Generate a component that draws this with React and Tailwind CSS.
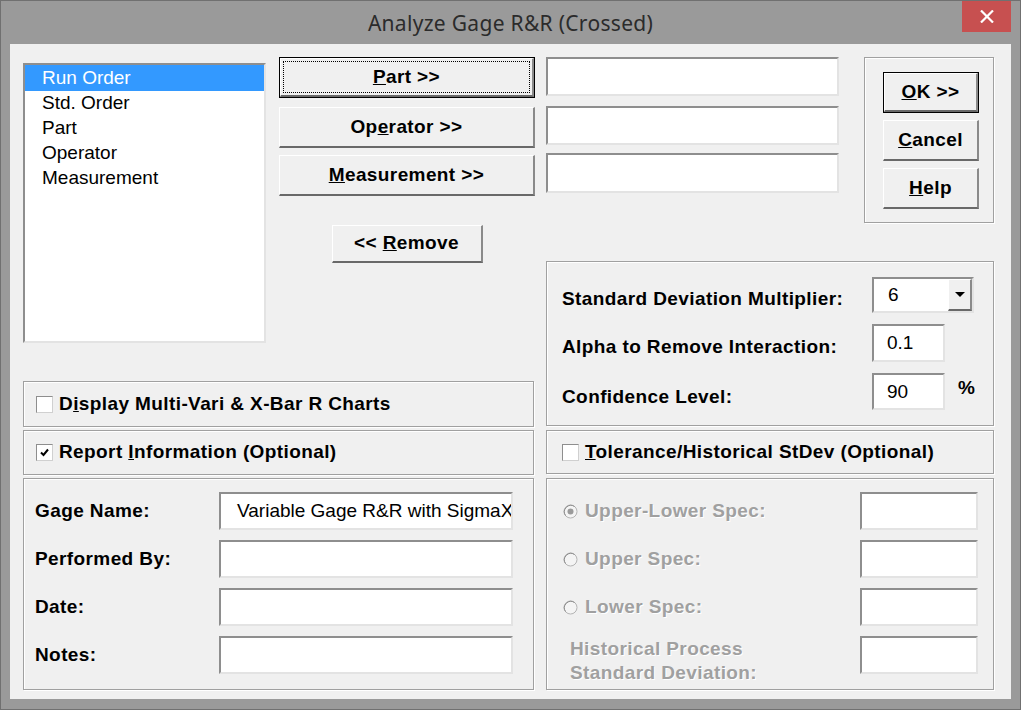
import React from "react";

const sunken =
  "bg-white border-t-2 border-l-2 border-t-[#8e8e8e] border-l-[#8e8e8e] border-b-2 border-r-2 border-b-[#e3e3e3] border-r-[#e3e3e3]";
const raised =
  "bg-[#f0f0f0] border-t border-l border-t-white border-l-white border-b-2 border-r-2 border-b-[#696969] border-r-[#8a8a8a]";
const group =
  "border border-[#a0a0a0] shadow-[inset_1px_1px_0_#fff,1px_1px_0_#fff]";
const bold = "font-bold text-[19px] tracking-[0.4px] text-black";
const disabled =
  "font-bold text-[19px] tracking-[0.4px] text-[#a0a0a0] [text-shadow:1px_1px_0_#fff]";

// push button, optional default (black frame) and focus rectangle
const Button = ({ children, isDefault, focus, className = "" }) => {
  if (isDefault) {
    return (
      <div className={`border border-black flex ${className}`}>
        <div className={`${raised} flex-1 flex p-[2px]`}>
          <div
            className={`flex-1 flex items-center justify-center ${bold} ${
              focus ? "border border-dotted border-black" : ""
            }`}
          >
            {children}
          </div>
        </div>
      </div>
    );
  }
  return (
    <div className={`${raised} flex items-center justify-center ${bold} ${className}`}>
      {children}
    </div>
  );
};

const Checkbox = ({ checked }) => (
  <div className="w-[17px] h-[17px] bg-white border border-[#8e8e8e] border-b-[#d0d0d0] border-r-[#d0d0d0] flex items-center justify-center shrink-0">
    {checked && (
      <svg width="11" height="11" viewBox="0 0 11 11">
        <path d="M2 5.5 L4.5 8 L9 2.5" stroke="#000" strokeWidth="2" fill="none" />
      </svg>
    )}
  </div>
);

const Radio = ({ checked }) => (
  <svg width="15" height="15" viewBox="0 0 15 15" className="shrink-0">
    <circle cx="7.5" cy="7.5" r="6.5" fill="#f4f4f4" stroke="#b4b4b4" strokeWidth="1" />
    <path d="M2.5 11.5 A6.5 6.5 0 0 1 11.5 2.5" stroke="#8e8e8e" strokeWidth="1" fill="none" />
    {checked && <circle cx="7.5" cy="7.5" r="3" fill="#9a9a9a" />}
  </svg>
);

const listItems = ["Run Order", "Std. Order", "Part", "Operator", "Measurement"];

export default function App() {
  return (
    <div className="w-[1021px] h-[710px] bg-[#9a9a9a] border border-[#707070] flex flex-col font-['Liberation_Sans',Arial,sans-serif]">
      {/* title bar */}
      <div className="h-[43px] relative flex items-center justify-center">
        <span className="font-['Noto_Sans',sans-serif] text-[21px] tracking-[0.3px] text-[#2b2b2b] pt-[3px]">
          Analyze Gage R&amp;R (Crossed)
        </span>
        <div className="absolute right-[9px] top-0 w-[49px] h-[31px] bg-[#c75050] flex items-center justify-center">
          <svg width="14" height="13" viewBox="0 0 14 13">
            <path d="M1 0.5 L13 12.5 M13 0.5 L1 12.5" stroke="#fff" strokeWidth="2.2" />
          </svg>
        </div>
      </div>

      {/* client area */}
      <div className="mx-[9px] h-[655px] bg-[#f0f0f0] flex pl-[13px] pt-[13px] gap-[11px]">
        {/* left column */}
        <div className="w-[512px] flex flex-col">
          <div className="flex gap-[13px] h-[286px]">
            <div className={`w-[243px] h-[280px] mt-[6px] ${sunken} border-r border-b`}>
              {listItems.map((item, i) => (
                <div
                  key={item}
                  className={`pl-[17px] text-[19px] flex items-center ${
                    i === 0 ? "h-[26px] bg-[#3399ff] text-white" : "h-[25px] text-black"
                  }`}
                >
                  {item}
                </div>
              ))}
            </div>
            <div className="w-[256px] flex flex-col">
              <Button isDefault focus className="h-[41px]">
                <span>
                  <u>P</u>art &gt;&gt;
                </span>
              </Button>
              <Button className="h-[41px] mt-[9px]">
                <span>
                  Op<u>e</u>rator &gt;&gt;
                </span>
              </Button>
              <Button className="h-[41px] mt-[7px]">
                <span>
                  <u>M</u>easurement &gt;&gt;
                </span>
              </Button>
              <Button className="h-[38px] w-[151px] mt-[29px] self-center">
                <span>
                  &lt;&lt; <u>R</u>emove
                </span>
              </Button>
            </div>
          </div>

          <div className={`${group} w-[511px] h-[46px] mt-[38px] flex items-center pl-[12px] gap-[6px]`}>
            <Checkbox />
            <span className={bold}>
              D<u>i</u>splay Multi-Vari &amp; X-Bar R Charts
            </span>
          </div>
          <div className={`${group} w-[511px] h-[45px] mt-[3px] flex items-center pl-[12px] gap-[6px]`}>
            <Checkbox checked />
            <span className={bold}>
              Report <u>I</u>nformation (Optional)
            </span>
          </div>
          <div className={`${group} w-[511px] h-[212px] mt-[3px] flex flex-col gap-[10px] pt-[13px] pl-[11px]`}>
            {["Gage Name:", "Performed By:", "Date:", "Notes:"].map((label, i) => (
              <div key={label} className="flex items-center h-[38px]">
                <span className={`${bold} w-[184px]`}>{label}</span>
                <div className={`${sunken} w-[294px] h-[38px] overflow-hidden whitespace-nowrap flex items-center`}>
                  {i === 0 && (
                    <span className="pl-[16px] text-[19px] text-black">
                      Variable Gage R&amp;R with SigmaXL
                    </span>
                  )}
                </div>
              </div>
            ))}
          </div>
        </div>

        {/* right column */}
        <div className="w-[448px] flex flex-col">
          <div className="flex h-[166px]">
            <div className="w-[293px] flex flex-col">
              <div className={`${sunken} h-[39px]`} />
              <div className={`${sunken} h-[39px] mt-[10px]`} />
              <div className={`${sunken} h-[40px] mt-[8px]`} />
            </div>
            <div className={`${group} ml-[25px] w-[130px] h-[166px] flex flex-col pt-[14px] pl-[18px] gap-[7px]`}>
              <Button isDefault className="w-[96px] h-[41px]">
                <span>
                  <u>O</u>K &gt;&gt;
                </span>
              </Button>
              <Button className="w-[96px] h-[41px]">
                <span>
                  <u>C</u>ancel
                </span>
              </Button>
              <Button className="w-[96px] h-[41px]">
                <span>
                  <u>H</u>elp
                </span>
              </Button>
            </div>
          </div>

          <div className={`${group} h-[165px] mt-[38px] flex flex-col pt-[15px] pl-[15px] gap-[11px]`}>
            <div className="flex items-center h-[36px]">
              <span className={`${bold} w-[310px] pt-[8px]`}>Standard Deviation Multiplier:</span>
              <div className={`${sunken} w-[102px] h-[36px] flex`}>
                <span className="flex-1 pl-[14px] pt-[2px] text-[19px] text-black">6</span>
                <div className={`${raised} w-[24px] flex items-center justify-center`}>
                  <svg width="10" height="6" viewBox="0 0 10 6">
                    <path d="M0 0 H10 L5 5 Z" fill="#000" />
                  </svg>
                </div>
              </div>
            </div>
            <div className="flex items-center h-[38px]">
              <span className={`${bold} w-[310px] pt-[8px]`}>Alpha to Remove Interaction:</span>
              <div className={`${sunken} w-[73px] h-[38px] pl-[13px] pt-[3px] text-[19px] text-black`}>0.1</div>
            </div>
            <div className="flex items-center h-[37px]">
              <span className={`${bold} w-[310px] pt-[12px]`}>Confidence Level:</span>
              <div className={`${sunken} w-[73px] h-[37px] pl-[13px] pt-[3px] text-[19px] text-black`}>90</div>
              <span className={`${bold} self-start ml-[13px] mt-[1px]`}>%</span>
            </div>
          </div>

          <div className={`${group} h-[44px] mt-[4px] flex items-center pl-[15px] gap-[6px]`}>
            <Checkbox />
            <span className={bold}>
              <u>T</u>olerance/Historical StDev (Optional)
            </span>
          </div>

          <div className={`${group} h-[212px] mt-[4px] flex flex-col gap-[10px] pt-[13px] pl-[16px]`}>
            {["Upper-Lower Spec:", "Upper Spec:", "Lower Spec:"].map((label, i) => (
              <div key={label} className="flex items-center h-[38px]">
                <div className="w-[297px] flex items-center gap-[7px]">
                  <Radio checked={i === 0} />
                  <span className={disabled}>{label}</span>
                </div>
                <div className={`${sunken} w-[118px] h-[38px]`} />
              </div>
            ))}
            <div className="flex items-center h-[38px]">
              <div className={`w-[297px] pl-[7px] pt-[12px] leading-[24px] ${disabled}`}>
                Historical Process
                <br />
                Standard Deviation:
              </div>
              <div className={`${sunken} w-[118px] h-[38px]`} />
            </div>
          </div>
        </div>
      </div>
    </div>
  );
}
